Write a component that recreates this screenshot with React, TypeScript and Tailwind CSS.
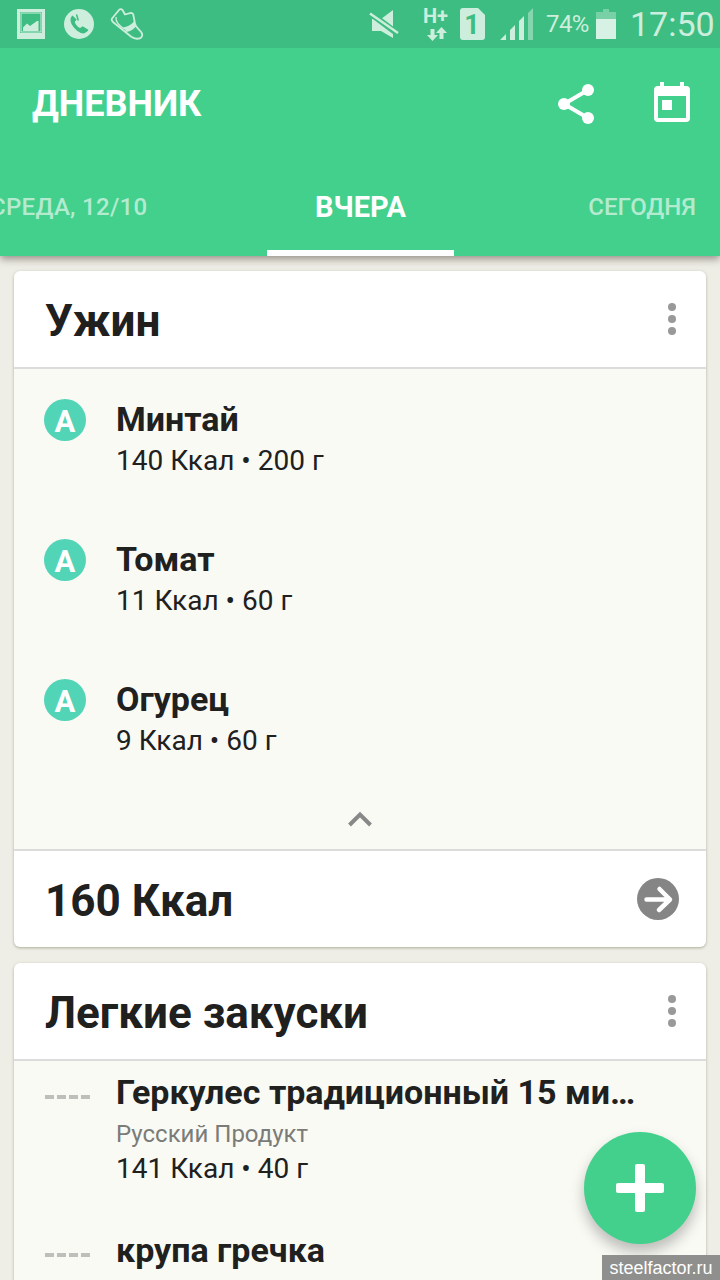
import type { ReactNode } from "react";

type FoodItem = {
  name: string;
  brand?: string;
  details: string;
  grade?: string;
};

const dinner: FoodItem[] = [
  { name: "Минтай", details: "140 Ккал • 200 г", grade: "A" },
  { name: "Томат", details: "11 Ккал • 60 г", grade: "A" },
  { name: "Огурец", details: "9 Ккал • 60 г", grade: "A" },
];

const snacks: FoodItem[] = [
  {
    name: "Геркулес традиционный 15 ми…",
    brand: "Русский Продукт",
    details: "141 Ккал • 40 г",
  },
  { name: "крупа гречка", brand: "Увелка", details: "125 Ккал • 40 г" },
];

const StatusBar = () => (
  <div className="flex h-12 items-center bg-[#3dbd81] text-[#cdeedd]">
    <svg width="150" height="48" viewBox="0 0 150 48" fill="currentColor">
      {/* picture */}
      <path
        fillRule="evenodd"
        d="M17 9h28v30H17zM20 12v21h22V12zM21.500 13.500h19v18h-19zM20.500 12.500v20h21v-20z"
      />
      <path d="M23 31v-3.500l4-4 3 2.500 7-5h1.500v10z" />
      {/* call */}
      <circle cx="79" cy="24" r="15" />
      <path
        d="M72.500 15.500c-3 2.500-2.500 7 1 11.500s8.500 7.500 11.500 6c1.500-.8 2.500-1.800 2.700-2.500l-5-4.300-2.700 1.700c-2.500-1.200-4.500-3.500-5.300-6l2-2.500z"
        fill="#3dbd81"
      />
      <path d="M76.500 14.500l1.800 6M83 27.500l5 3" stroke="#3dbd81" strokeWidth="1.500" />
      {/* sneaker */}
      <g fill="none" stroke="currentColor" strokeWidth="1.800" strokeLinejoin="round">
        <path d="M112 18.500l7-8.500c1-1.200 2.500-1.200 3.500 0l2.500 4.500 5-1.300c2-.5 3 0 3.300 1.500l1.700 9c.6 3 2.500 4.500 4.500 6.500 3 3 3.500 5.500 1.800 7.200-1.800 2-6.500 1.800-10-.7L113.500 22.500c-1.600-1.300-2.300-2.700-1.500-4z" />
        <path d="M116 17c-.5 5 3 8 8 12" strokeWidth="1.300" />
      </g>
      <path d="M123 27.500c4-.5 8.500-3 11.500-6.500l1.500 5.500c-2 2.500-5.500 5-9.500 5.500z" />
    </svg>
    <svg
      className="ml-auto"
      width="170"
      height="48"
      viewBox="367 0 170 48"
      fill="currentColor"
    >
      {/* muted speaker */}
      <path d="M372 19h9l12-9v28l-12-7h-9z" />
      <path d="M370 13l28 21" stroke="#3dbd81" strokeWidth="6" />
      <path d="M370 13.500l28 19.500" stroke="currentColor" strokeWidth="2.500" />
      {/* mobile data */}
      <text x="423" y="23" fontSize="20" fontWeight="700" fontFamily="Roboto">
        H+
      </text>
      <path d="M430.500 29h4v6h3.500l-5.500 6-5.500-6h3.500zM439.500 39v-6H436l5.500-6 5.500 6h-3.500v6z" />
      {/* sim card */}
      <path d="M463 8h15l7 7v22q0 3-3 3h-19q-3 0-3-3V11q0-3 3-3z" />
      <text
        x="472"
        y="34"
        fontSize="27"
        fontWeight="700"
        fontFamily="Roboto"
        textAnchor="middle"
        fill="#3dbd81"
      >
        1
      </text>
      {/* signal */}
      <path d="M500 40l6-6v6zM510 30l5-5v15h-5zM519 21l5-5v24h-5z" />
      <path d="M528 13l5-5v32h-5z" opacity=".5" />
    </svg>
    <span className="ml-[9px] w-[44px] text-[24px] leading-none tracking-[-0.600px]">
      74%
    </span>
    <svg className="ml-1.5" width="20" height="30" viewBox="0 0 20 30">
      <path d="M7 0h6v3h7v7H0V3h7z" fill="#78d0a6" />
      <path d="M0 10h20v20H0z" fill="#d8f1e5" />
    </svg>
    <span className="ml-[14px] mr-[10px] w-[80px] text-[34px] leading-none">
      17:50
    </span>
  </div>
);

const AppBar = () => (
  <div className="flex h-28 items-center pl-8 pr-[30px] text-white">
    <h1 className="text-[36px] font-bold leading-none tracking-normal">ДНЕВНИК</h1>
    <svg className="ml-auto" width="36" height="40" viewBox="0 0 36 40" fill="currentColor">
      <path d="M30 6L6 20l24 14" fill="none" stroke="currentColor" strokeWidth="4" />
      <circle cx="30" cy="6" r="6" />
      <circle cx="6" cy="20" r="6" />
      <circle cx="30" cy="34" r="6" />
    </svg>
    <svg
      className="ml-[60px] -mt-1"
      width="36"
      height="40"
      viewBox="0 0 36 40"
      fill="currentColor"
    >
      <path
        fillRule="evenodd"
        d="M6 0h4v4h16V0h4v4h2q4 0 4 4v28q0 4-4 4H4q-4 0-4-4V8q0-4 4-4h2zM4 14v22h28V14z"
      />
      <path d="M8 18h10v10H8z" />
    </svg>
  </div>
);

const DayTabs = () => (
  <div className="flex h-24 items-stretch font-medium text-[#b4ead0]">
    <div className="flex w-[267px] items-center">
      <span className="-ml-[10px] pb-[3px] text-[24px] leading-none tracking-[0.300px] whitespace-nowrap">
        СРЕДА, 12/10
      </span>
    </div>
    <div className="flex w-[187px] items-center justify-center border-b-[6px] border-white pt-1 text-white">
      <span className="text-[29px] font-bold leading-none">ВЧЕРА</span>
    </div>
    <div className="flex flex-1 items-center justify-end pr-6">
      <span className="pb-[3px] text-[24px] leading-none">СЕГОДНЯ</span>
    </div>
  </div>
);

const MoreButton = () => (
  <button className="flex flex-col gap-1">
    <span className="h-2 w-2 rounded-full bg-[#999]" />
    <span className="h-2 w-2 rounded-full bg-[#999]" />
    <span className="h-2 w-2 rounded-full bg-[#999]" />
  </button>
);

const MealCard = ({ title, children }: { title: string; children: ReactNode }) => (
  <section className="overflow-hidden rounded-md bg-white shadow-[0_1px_3px_rgba(90,90,60,0.450)]">
    <div className="flex h-[98px] items-center justify-between border-b-2 border-[#dcdcdc] pl-[31px] pr-[30px]">
      <h2 className="pt-1 text-[44px] font-bold leading-none">{title}</h2>
      <MoreButton />
    </div>
    {children}
  </section>
);

const GradeBadge = ({ grade }: { grade: string }) => (
  <span className="mt-[30px] flex h-[42px] w-[42px] items-center justify-center rounded-full bg-[#52d4b7] pt-0.5 text-[31px] font-bold leading-none text-white">
    {grade}
  </span>
);

const NoGrade = () => (
  <span className="ml-px mt-[34px] flex gap-[3px]">
    <span className="h-1 w-[9px] bg-[#bebfba]" />
    <span className="h-1 w-[9px] bg-[#bebfba]" />
    <span className="h-1 w-[9px] bg-[#bebfba]" />
    <span className="h-1 w-[9px] bg-[#bebfba]" />
  </span>
);

const FoodRow = ({ item }: { item: FoodItem }) => (
  <div className={`flex pl-[30px] ${item.brand ? "h-[158px]" : "h-[140px]"}`}>
    <div className="w-[72px] shrink-0">
      {item.grade ? <GradeBadge grade={item.grade} /> : <NoGrade />}
    </div>
    <div className={`whitespace-nowrap ${item.brand ? "pt-[11px]" : "pt-[30px]"}`}>
      <div className="text-[34px] font-bold leading-[40px]">{item.name}</div>
      {item.brand && (
        <div className="mt-[7px] text-[24px] leading-[30px] text-[#7b7c79]">{item.brand}</div>
      )}
      <div className={`text-[28px] leading-[38px] ${item.brand ? "mt-px" : "mt-[3px]"}`}>
        {item.details}
      </div>
    </div>
  </div>
);

export default function App() {
  return (
    <div className="relative flex h-[1280px] w-[720px] flex-col overflow-hidden bg-[#efeee6] font-['Roboto',sans-serif] text-[#20201e]">
      <header className="relative z-10 bg-[#43d08d] shadow-[0_3px_8px_rgba(60,50,40,0.500)]">
        <StatusBar />
        <AppBar />
        <DayTabs />
      </header>

      <main className="flex flex-col gap-4 px-3.5 pt-[15px]">
        <MealCard title="Ужин">
          <div className="h-[480px] bg-[#f9faf4]">
            {dinner.map((item) => (
              <FoodRow key={item.name} item={item} />
            ))}
            <div className="flex h-[60px] items-center justify-center">
              <svg width="24" height="16" viewBox="0 0 24 16" fill="none">
                <path d="M1.500 14L12 3.500 22.500 14" stroke="#888" strokeWidth="4" />
              </svg>
            </div>
          </div>
          <div className="flex h-[98px] items-center justify-between border-t-2 border-[#dcdcdc] pl-[31px] pr-[27px]">
            <span className="pt-1 text-[44px] font-bold leading-none">160 Ккал</span>
            <svg width="42" height="42" viewBox="0 0 42 42">
              <circle cx="21" cy="21" r="21" fill="#858585" />
              <path
                d="M9.500 21.500H32M22.500 11l10.500 10.500L22 32"
                fill="none"
                stroke="#fff"
                strokeWidth="4.500"
                strokeLinecap="round"
                strokeLinejoin="round"
              />
            </svg>
          </div>
        </MealCard>

        <MealCard title="Легкие закуски">
          <div className="bg-[#f9faf4]">
            {snacks.map((item) => (
              <FoodRow key={item.name} item={item} />
            ))}
          </div>
        </MealCard>
      </main>

      <button className="absolute bottom-9 right-6 flex h-28 w-28 items-center justify-center rounded-full bg-[#43d08d] shadow-[0_8px_14px_rgba(0,0,0,0.250)]">
        <svg width="48" height="48" viewBox="0 0 48 48" fill="#fff">
          <rect x="19" width="10" height="48" rx="2" />
          <rect y="19" width="48" height="10" rx="2" />
        </svg>
      </button>

      <div className="absolute bottom-0 right-0 flex h-[25px] w-[118px] items-center justify-center bg-[#8f8f8d] font-['Liberation_Sans',sans-serif] text-[18px] leading-none text-white">
        steelfactor.ru
      </div>
    </div>
  );
}
